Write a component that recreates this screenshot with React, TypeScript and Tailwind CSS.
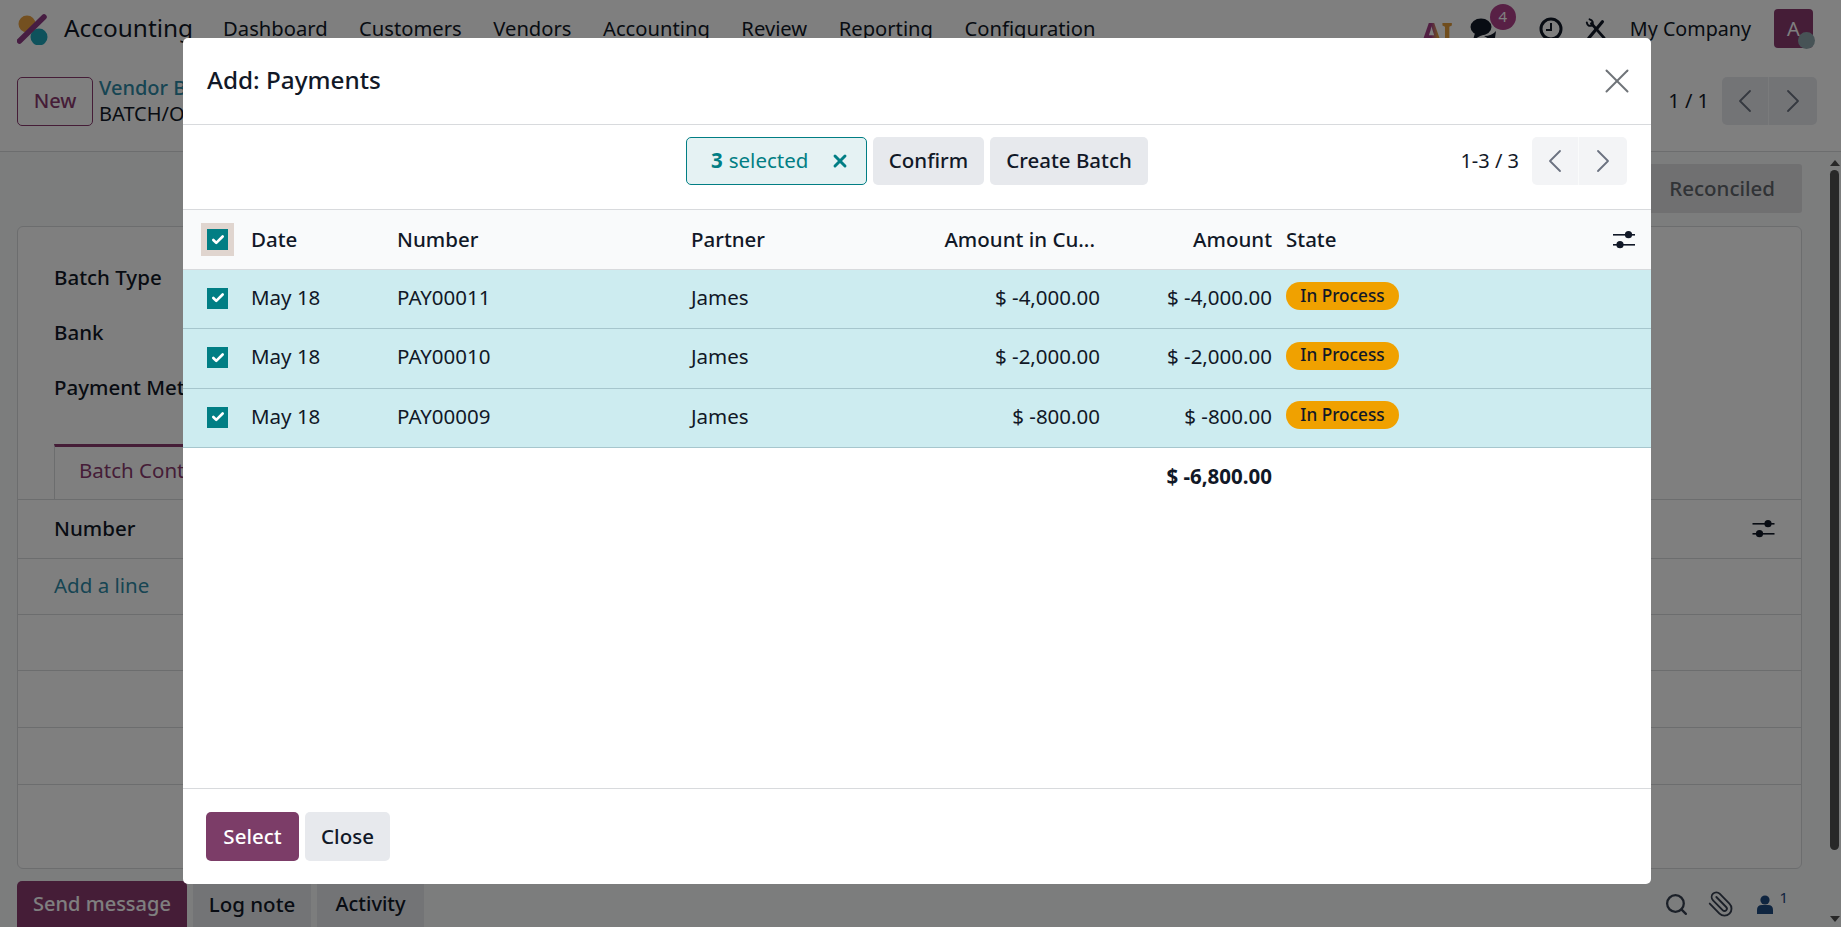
import React from 'react';
import { X, ChevronLeft, ChevronRight, Check, Search, Paperclip } from 'lucide-react';

const FONT = "font-['Noto_Sans',sans-serif]";

const rows = [
  { number: 'PAY00011', currency: '$ -4,000.00', amount: '$ -4,000.00', height: 'h-[59px]' },
  { number: 'PAY00010', currency: '$ -2,000.00', amount: '$ -2,000.00', height: 'h-[60px]' },
  { number: 'PAY00009', currency: '$ -800.00', amount: '$ -800.00', height: 'h-[59px]' },
];

const Logo = () => (
  <svg viewBox="0 0 32 32" className="h-[32px] w-[32px] shrink-0">
    <circle cx="10" cy="11" r="8.5" fill="#e8a040" />
    <circle cx="22" cy="24" r="8.5" fill="#1ea5b8" />
    <path d="M2.5 28 L27 4" stroke="#8f3b85" strokeWidth="5.5" strokeLinecap="round" />
  </svg>
);

const Filters = ({ className }: { className: string }) => (
  <svg viewBox="0 0 22 19" className={className} fill="currentColor">
    <rect x="0" y="4" width="22" height="1.6" />
    <circle cx="15.5" cy="4.7" r="3.6" />
    <rect x="0" y="14" width="22" height="1.6" />
    <circle cx="7" cy="14.7" r="3.6" />
  </svg>
);

const Pager = ({ className }: { className: string }) => (
  <div className={`flex h-[48px] w-[95px] overflow-hidden rounded-[5px] ${className}`}>
    <div className="flex w-[47px] items-center justify-center border-r border-white/60">
      <ChevronLeft className="h-[40px] w-[40px] shrink-0 text-[#6b7280]" strokeWidth={1.1} />
    </div>
    <div className="flex flex-1 items-center justify-center">
      <ChevronRight className="h-[40px] w-[40px] shrink-0 text-[#6b7280]" strokeWidth={1.1} />
    </div>
  </div>
);

const Checkbox = () => (
  <div className="flex h-[21px] w-[21px] items-center justify-center bg-[#017e84]">
    <Check className="h-[14px] w-[14px] text-white" strokeWidth={4.5} />
  </div>
);

const TopBar = () => (
  <div className="flex h-[57px] items-center bg-white pl-[17px] pr-[28px] text-[#111827]">
    <Logo />
    <span className="ml-[15px] mr-[30px] text-[24.4px]">Accounting</span>
    <nav className="flex gap-[31.5px] text-[20.2px]">
      <span>Dashboard</span>
      <span>Customers</span>
      <span>Vendors</span>
      <span>Accounting</span>
      <span>Review</span>
      <span>Reporting</span>
      <span>Configuration</span>
    </nav>
    <div className="ml-auto flex items-center">
      <span className="mr-[17px] mt-[8px] bg-linear-to-r from-[#a33d85] from-30% to-[#e09a3a] to-50% bg-clip-text text-[29px] font-bold leading-none text-transparent">AI</span>
      <div className="relative mr-[42px] h-[24px] w-[27px]">
        <svg viewBox="0 0 27 24" className="h-[24px] w-[27px]" fill="#111827">
          <ellipse cx="11" cy="10" rx="10.5" ry="8.5" />
          <path d="M5 16 L3 23 L12 18 Z" />
          <path d="M14 19 Q22 19 26 14 L25 21 Q19 23 14 19 Z" />
        </svg>
        <span className="absolute -top-[13px] left-[20px] flex h-[26px] w-[26px] items-center justify-center rounded-full bg-[#b0408a] text-[15px] text-white">4</span>
      </div>
      <svg viewBox="0 0 24 24" className="mr-[22px] h-[24px] w-[24px]" fill="none" stroke="#111827" strokeWidth="3">
        <circle cx="12" cy="12" r="10" />
        <path d="M12 6 V13 H7" strokeWidth="2" />
      </svg>
      <svg viewBox="0 0 24 24" className="mr-[23px] h-[24px] w-[22px]" fill="none" stroke="#111827" strokeLinecap="round">
        <path d="M4 22 L19 4" strokeWidth="3.5" />
        <path d="M7 6 L21 22" strokeWidth="3" />
        <path d="M2 5 Q3 10 8 8 M5 1.5 Q10 3 8 8" strokeWidth="2.2" />
      </svg>
      <span className="text-[19.7px]">My Company</span>
      <div className="relative ml-[23px] flex h-[39px] w-[39px] items-center justify-center rounded-[4px] bg-[#8a3a6f] text-[20px] text-white">
        A
        <span className="absolute -bottom-[1px] -right-[2px] h-[17px] w-[17px] rounded-full bg-[#8fa7ad]" />
      </div>
    </div>
  </div>
);

const ControlPanel = () => (
  <div className="flex h-[95px] items-center border-b border-[#d8dadd] bg-white pl-[17px] pr-[24px]">
    <div className="-mt-[6px] flex h-[49px] w-[76px] items-center justify-center rounded-[5px] border border-[#8a3a6f] text-[20px] font-medium text-[#8a3a6f]">New</div>
    <div className="-mt-[6px] ml-[6px] text-[20px] leading-[26px]">
      <div className="font-medium text-[#2f8aa6]">Vendor Bills</div>
      <div className="text-[#111827]">BATCH/OUT/2025/0001</div>
    </div>
    <span className="-mt-[6px] ml-auto mr-[13px] text-[20px] text-[#111827]">1 / 1</span>
    <div className="-mt-[6px]">
      <Pager className="bg-[#e7e9ed]" />
    </div>
  </div>
);

const FormCard = () => (
  <div className="flex-1 overflow-hidden bg-[#f9fafb] pl-[17px] pr-[39px]">
    <div className="flex h-[74px] items-start justify-end pt-[12px]">
      <div className="flex h-[49px] w-[151px] items-center justify-end rounded-r-[3px] bg-[#e0e1e3] pr-[27px] text-[20.5px] font-medium text-[#62666c]">Reconciled</div>
    </div>
    <div className="h-[643px] rounded-[6px] border border-[#d8dadd] bg-white">
      <div className="h-[217px] pl-[36px] pt-[35px] text-[20.5px] font-medium text-[#111827]">
        <div className="h-[55px]">Batch Type</div>
        <div className="h-[55px]">Bank</div>
        <div>Payment Method</div>
      </div>
      <div className="ml-[36px] flex h-[55px] w-[200px] items-center border-l border-t-[3px] border-l-[#d8dadd] border-t-[#8a3a6f] pb-[5px] pl-[24px] text-[20.5px] text-[#8a3a6f]">Batch Content</div>
      <div className="flex h-[60px] items-center justify-between border-y border-[#d8dadd] pb-[2px] pl-[36px] pr-[26px] text-[20.5px] font-medium text-[#111827]">
        Number
        <Filters className="h-[19px] w-[23px] text-[#111827]" />
      </div>
      <div className="flex h-[56px] items-center border-b border-[#d8dadd] pb-[2px] pl-[36px] text-[20.5px] text-[#2f8aa6]">Add a line</div>
      <div className="h-[56px] border-b border-[#d8dadd]" />
      <div className="h-[57px] border-b border-[#d8dadd]" />
      <div className="h-[57px] border-b border-[#d8dadd]" />
    </div>
  </div>
);

const Chatter = () => (
  <div className="flex h-[46px] items-center bg-[#f9fafb] pl-[17px] pr-[53px]">
    <div className="flex h-[46px] w-[170px] items-center justify-center rounded-t-[5px] bg-[#8a3a6f] text-[20px] font-medium text-white">Send message</div>
    <div className="ml-[6px] flex h-[46px] w-[118px] items-center justify-center bg-[#e7e9ed] text-[20.5px] font-medium text-[#111827]">Log note</div>
    <div className="ml-[6px] flex h-[46px] w-[107px] items-center justify-center bg-[#e7e9ed] text-[20px] font-medium text-[#111827]">Activity</div>
    <div className="ml-auto flex items-center text-[#374151]">
      <Search className="h-[25px] w-[25px]" strokeWidth={2.2} />
      <Paperclip className="ml-[18px] h-[28px] w-[28px] -scale-x-100" strokeWidth={1.6} />
      <svg viewBox="0 0 16 19" className="ml-[22px] h-[19px] w-[16px] text-[#1f4a80]" fill="currentColor">
        <circle cx="8" cy="5" r="4.6" />
        <path d="M0 19 V15 Q0 10 5 10 H11 Q16 10 16 15 V19 Z" />
      </svg>
      <span className="-mt-[14px] ml-[6px] text-[15px] leading-none text-[#1f4a80]">1</span>
    </div>
  </div>
);

const Scrollbar = () => (
  <div className="absolute right-0 top-[151px] bottom-0 w-[12px]">
    <div className="mx-auto mt-[9px] h-0 w-0 border-x-[5px] border-b-[6px] border-x-transparent border-b-[#505050]" />
    <div className="absolute left-[1px] top-[19px] h-[680px] w-[9px] rounded-full bg-[#505050]" />
    <div className="absolute bottom-[5px] left-[1px] h-0 w-0 border-x-[5px] border-t-[6px] border-x-transparent border-t-[#505050]" />
  </div>
);

const Cell = ({ className, children }: { className: string; children?: React.ReactNode }) => (
  <div className={`shrink-0 ${className}`}>{children}</div>
);

const Dialog = () => (
  <div className="flex h-[846px] w-[1468px] flex-col overflow-hidden rounded-[5px] bg-white text-[#111827]">
    <div className="flex h-[87px] shrink-0 items-center justify-between border-b border-[#d8dadd] pl-[24px] pr-[13px]">
      <h4 className="pb-[2px] text-[24.3px] font-medium">Add: Payments</h4>
      <X className="h-[42px] w-[42px] text-[#6f7378]" strokeWidth={1.15} />
    </div>
    <div className="flex h-[85px] shrink-0 items-start border-b border-[#d8dadd] pl-[503px] pr-[24px] pt-[12px]">
      <div className="flex h-[48px] w-[181px] items-center rounded-[5px] border border-[#017e84] bg-[#e5f2f3] pb-[1px] pl-[24px] text-[20.5px] text-[#017e84]">
        <span className="font-bold">3</span>
        <span className="ml-[6px]">selected</span>
        <X className="ml-auto mr-[16px] h-[20px] w-[20px]" strokeWidth={3.5} />
      </div>
      <div className="ml-[6px] flex h-[48px] w-[111px] items-center justify-center rounded-[5px] bg-[#e7e9ed] pb-[2px] text-[20.5px] font-medium">Confirm</div>
      <div className="ml-[6px] flex h-[48px] w-[158px] items-center justify-center rounded-[5px] bg-[#e7e9ed] pb-[2px] text-[20.5px] font-medium">Create Batch</div>
      <span className="ml-auto mr-[13px] flex h-[48px] items-center text-[20px]">1-3 / 3</span>
      <Pager className="bg-[#f3f4f6]" />
    </div>
    <div className="flex h-[60px] shrink-0 items-center border-b border-[#d8dadd] bg-[#f9fafb] text-[20.5px] font-medium">
      <Cell className="ml-[18px] flex h-[33px] w-[33px] items-center justify-center bg-[#e0d5cf]"><Checkbox /></Cell>
      <Cell className="ml-[17px] -mt-[1px] w-[146px]">Date</Cell>
      <Cell className="-mt-[1px] w-[294px]">Number</Cell>
      <Cell className="-mt-[1px] w-[200px]">Partner</Cell>
      <Cell className="-mt-[1px] w-[204px] text-right">Amount in Cu...</Cell>
      <Cell className="-mt-[1px] w-[177px] text-right">Amount</Cell>
      <Cell className="ml-[14px] -mt-[1px]">State</Cell>
      <Filters className="ml-auto mr-[16px] h-[19px] w-[22px]" />
    </div>
    {rows.map((r) => (
      <div key={r.number} className={`flex shrink-0 items-center border-b border-[#a6c6cd] bg-[#cdecf0] pb-[2px] text-[20.5px] ${r.height}`}>
        <Cell className="ml-[24px] flex w-[21px]"><Checkbox /></Cell>
        <Cell className="ml-[23px] -mt-[2px] w-[146px]">May 18</Cell>
        <Cell className="-mt-[2px] w-[294px]">{r.number}</Cell>
        <Cell className="-mt-[2px] w-[200px]">James</Cell>
        <Cell className="-mt-[2px] w-[209px] text-right">{r.currency}</Cell>
        <Cell className="-mt-[2px] w-[172px] text-right">{r.amount}</Cell>
        <Cell className="ml-[14px] -mt-[4px] flex h-[28px] w-[113px] items-center justify-center rounded-full bg-[#f0a100] pb-[1px] text-[17.2px] font-medium">In Process</Cell>
      </div>
    ))}
    <div className="flex h-[56px] shrink-0 items-center justify-end pr-[379px] text-[20.5px] font-bold">$ -6,800.00</div>
    <div className="flex-1" />
    <div className="flex h-[96px] shrink-0 items-center border-t border-[#d8dadd] pl-[23px]">
      <div className="flex h-[49px] w-[93px] items-center justify-center rounded-[5px] bg-[#7c3d68] text-[20.5px] font-medium text-white">Select</div>
      <div className="ml-[6px] flex h-[49px] w-[85px] items-center justify-center rounded-[5px] bg-[#e7e9ed] text-[20.5px] font-medium">Close</div>
    </div>
  </div>
);

const App: React.FC = () => {
  return (
    <div className={`relative flex h-[927px] w-[1841px] flex-col overflow-hidden bg-white ${FONT}`}>
      <TopBar />
      <ControlPanel />
      <FormCard />
      <Chatter />
      <Scrollbar />
      <div className="absolute inset-0 bg-black/50 pl-[183px] pt-[38px]">
        <Dialog />
      </div>
    </div>
  );
};

export default App;
